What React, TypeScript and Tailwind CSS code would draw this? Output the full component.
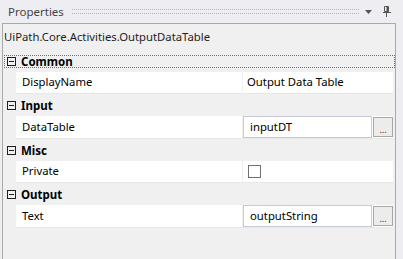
import React from "react";

type Row =
  | { kind: "header"; label: string; focused?: boolean }
  | { kind: "text"; name: string; value: string }
  | { kind: "input"; name: string; value: string }
  | { kind: "check"; name: string };

const ROWS: Row[] = [
  { kind: "header", label: "Common", focused: true },
  { kind: "text", name: "DisplayName", value: "Output Data Table" },
  { kind: "header", label: "Input" },
  { kind: "input", name: "DataTable", value: "inputDT" },
  { kind: "header", label: "Misc" },
  { kind: "check", name: "Private" },
  { kind: "header", label: "Output" },
  { kind: "input", name: "Text", value: "outputString" },
];

function CollapseBox() {
  return (
    <svg width="9" height="9" viewBox="0 0 9 9" className="shrink-0">
      <rect x="0.5" y="0.5" width="8" height="8" fill="none" stroke="#1e1e1e" />
      <path d="M2 4.5h5" stroke="#1e1e1e" />
    </svg>
  );
}

function Pin() {
  return (
    <svg width="8" height="11" viewBox="0 0 8 11">
      <path d="M1.5 0.5h4v5h-4z" fill="none" stroke="#555" />
      <path d="M4.5 0.5v5" stroke="#555" strokeWidth="2" />
      <path d="M0 6.5h8" stroke="#555" />
      <path d="M3.5 6.5v4.5" stroke="#555" />
    </svg>
  );
}

function HeaderRow({ label, focused }: { label: string; focused?: boolean }) {
  return (
    <div className="h-[22px] pt-[5px] pl-[1px]">
      <div
        className={
          "flex h-[13px] items-center gap-[5px] border border-dotted pl-[2px] " +
          (focused ? "border-[#6b6b6b]" : "border-transparent")
        }
      >
        <CollapseBox />
        <span className="text-[11.5px] font-bold leading-none text-black">{label}</span>
      </div>
    </div>
  );
}

function PropertyRow({ row }: { row: Exclude<Row, { kind: "header" }> }) {
  const tall = row.kind === "input";
  return (
    <div
      className={
        "flex pl-[13px] pr-[2px] " + (tall ? "h-[23px]" : "h-[22px]")
      }
    >
      <div className="flex w-[226px] items-center border-b border-[#e8e8e8] bg-white pl-[6px] text-black">
        {row.name}
      </div>
      <div className="w-[1px] bg-[#f0f0f0]" />
      <div className="flex flex-1 items-center border-b border-[#e8e8e8] bg-white">
        {row.kind === "text" && (
          <span className="pl-[4px] text-black">{row.value}</span>
        )}
        {row.kind === "check" && (
          <div className="ml-[5px] h-[13px] w-[13px] border border-[#707070] bg-white" />
        )}
        {row.kind === "input" && (
          <div className="flex h-full flex-1 items-center">
            <div className="flex h-full flex-1 items-center border border-[#c5cadb] bg-white pl-[6px] text-black">
              {row.value}
            </div>
            <div className="ml-[1px] flex h-[20px] w-[20px] items-end justify-center border border-[#a8a8a8] bg-[#ececec] pb-[2px] text-[9px] leading-none text-[#1e1e1e]">
              ...
            </div>
          </div>
        )}
      </div>
    </div>
  );
}

export default function App() {
  return (
    <div
      className="h-[259px] w-[403px] overflow-hidden bg-[#eeeef2] text-[11.3px]"
      style={{ fontFamily: '"Noto Sans", "Open Sans", sans-serif' }}
    >
      <div className="flex h-[23px] items-center pl-[8px] pr-[12px]">
        <span className="text-[11.5px] text-[#444444]">Properties</span>
        <div className="ml-[8px] mr-[6px] h-[5px] flex-1 border-y border-dotted border-[#b4b4b4]" />
        <svg width="7" height="4" viewBox="0 0 7 4" className="mr-[11px]">
          <path d="M0 0h7l-3.5 4z" fill="#555" />
        </svg>
        <Pin />
      </div>
      <div className="ml-[2px] mr-[7px] h-[240px] border-x border-t border-[#a9a9a9] bg-[#f0f0f0]">
        <div className="flex h-[26px] items-center pl-[1px] text-[#1e1e1e]">
          UiPath.Core.Activities.OutputDataTable
        </div>
        {ROWS.map((r, i) =>
          r.kind === "header" ? (
            <HeaderRow key={`row-${i}`} label={r.label} focused={r.focused} />
          ) : (
            <PropertyRow key={`row-${i}`} row={r} />
          ),
        )}
      </div>
    </div>
  );
}
